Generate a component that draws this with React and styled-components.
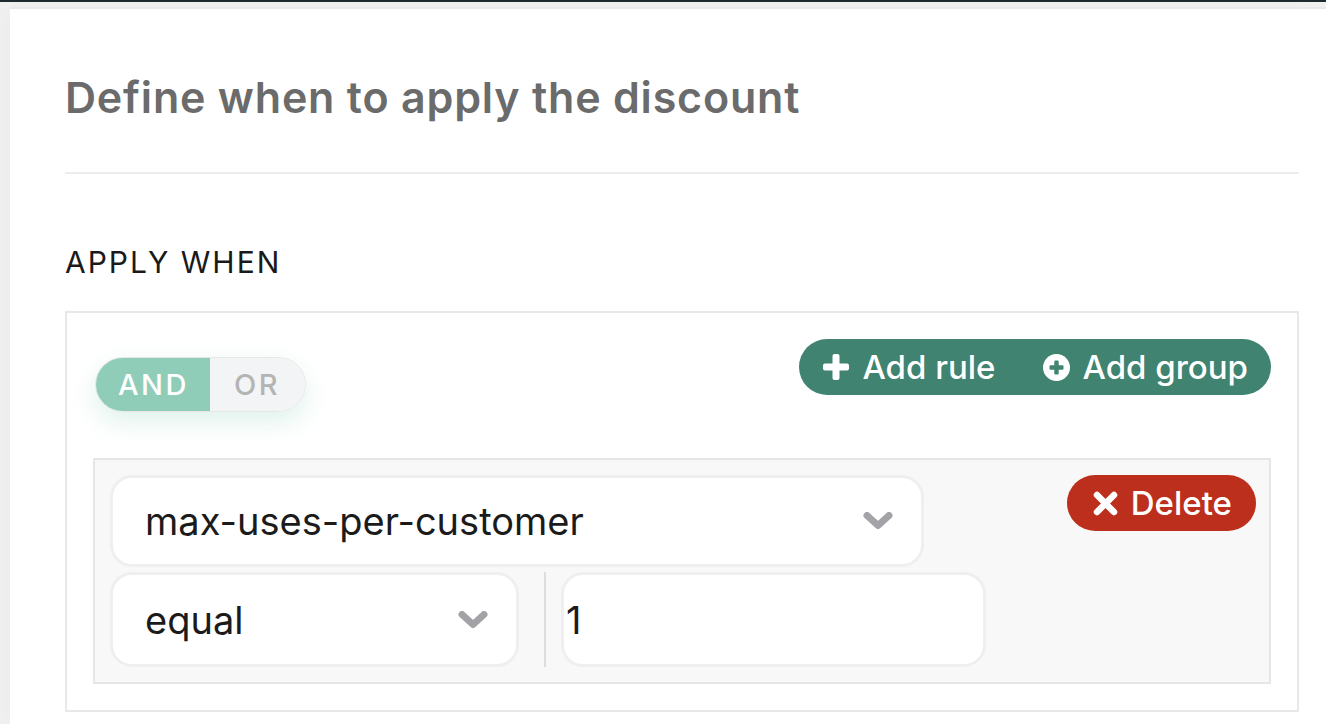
import styled, { createGlobalStyle } from 'styled-components';

const GlobalStyle = createGlobalStyle`
  html, body {
    margin: 0;
    padding: 0;
    background-color: #f2f2f2;
    font-family: Inter, 'Noto Sans', sans-serif;
  }
  * {
    box-sizing: border-box;
  }
`;

const TopBar = styled.div`
  height: 2px;
  background-color: #1d2b31;
`;

const Page = styled.div`
  padding: 5px 0 0 10px;
  height: 722px;
  overflow: hidden;
`;

const Card = styled.div`
  background-color: #fff;
  border-top: 2px solid #e9e9e9;
  box-shadow: -10px 0 30px rgba(0, 0, 0, 0.03);
  padding: 64px 27px 0 55px;
  height: 100%;
`;

const Title = styled.h1`
  margin: 0;
  font-size: 43px;
  line-height: 48px;
  font-weight: 600;
  letter-spacing: 0.8px;
  color: #6b6b6b;
`;

const Divider = styled.hr`
  margin: 51px 0 0 0;
  border: none;
  border-top: 2px solid #ececec;
`;

const Label = styled.div`
  margin-top: 70px;
  font-size: 30px;
  line-height: 36px;
  letter-spacing: 2px;
  color: #1a1a1a;
`;

const RuleBox = styled.div`
  margin-top: 31px;
  border: 2px solid #e8e8e8;
  padding: 26px 26px 26px 26px;
`;

const Header = styled.div`
  display: flex;
  justify-content: space-between;
  align-items: flex-start;
`;

const Toggle = styled.div`
  display: flex;
  margin: 18px 0 0 2px;
  height: 55px;
  border-radius: 28px;
  border: 1px solid #e6e6e6;
  overflow: hidden;
  box-shadow: 0 10px 26px rgba(110, 195, 165, 0.22);
`;

const ToggleOption = styled.span`
  display: flex;
  align-items: center;
  padding: ${({ active }) => (active ? '0 21px 0 22px' : '0 25px 0 24px')};
  font-size: 29px;
  font-weight: 500;
  letter-spacing: 2.5px;
  color: ${({ active }) => (active ? '#fff' : '#b4b4b4')};
  background-color: ${({ active }) => (active ? '#8fcdb9' : '#f3f4f5')};
`;

const ActionPill = styled.div`
  display: flex;
  height: 56px;
  border-radius: 28px;
  background-color: #3f8370;
`;

const PillButton = styled.button`
  display: flex;
  align-items: center;
  gap: 13px;
  border: none;
  background: ${({ danger }) => (danger ? '#bd2f1d' : 'transparent')};
  color: #fff;
  font-family: inherit;
  font-size: 33px;
  font-weight: 500;
  padding: ${({ danger }) => (danger ? '0 24px 0 26px' : '0 23px 0 24px')};
  height: 56px;
  border-radius: 28px;
  cursor: pointer;
  svg {
    flex-shrink: 0;
  }
`;

const Group = styled.div`
  margin-top: 46px;
  display: flex;
  justify-content: space-between;
  align-items: flex-start;
  background-color: #f8f8f8;
  border: 2px solid #e6e6e6;
  padding: 15px 13px 15px 15px;
`;

const Rules = styled.div`
  display: flex;
  flex-direction: column;
  gap: 5px;
`;

const Row = styled.div`
  display: flex;
  align-items: stretch;
`;

const Select = styled.div`
  display: flex;
  align-items: center;
  justify-content: space-between;
  width: ${({ width }) => width}px;
  height: ${({ height }) => height}px;
  padding: 0 28px 0 32px;
  background-color: #fff;
  border: 3px solid #efefef;
  border-radius: 22px;
  font-size: 38px;
  color: #1b1b1b;
`;

const Separator = styled.div`
  width: 2px;
  margin: 0 15px 0 25px;
  background-color: #dcdcdc;
`;

const Input = styled.input`
  width: 425px;
  height: 95px;
  padding: 0 2px;
  background-color: #fff;
  border: 3px solid #efefef;
  border-radius: 22px;
  font-family: inherit;
  font-size: 38px;
  color: #1b1b1b;
  outline: none;
`;

const Chevron = () => (
  <svg width="30" height="18" viewBox="0 0 30 18">
    <path
      d="M4 3.5 L15 13.5 L26 3.5"
      fill="none"
      stroke="#a2a2a7"
      strokeWidth="7"
      strokeLinecap="round"
      strokeLinejoin="round"
    />
  </svg>
);

const PlusIcon = () => (
  <svg width="26" height="26" viewBox="0 0 26 26">
    <rect x="9.5" y="0" width="7" height="26" rx="2" fill="#fff" />
    <rect x="0" y="9.5" width="26" height="7" rx="2" fill="#fff" />
  </svg>
);

const PlusCircleIcon = () => (
  <svg width="27" height="27" viewBox="0 0 27 27">
    <circle cx="13.5" cy="13.5" r="13.5" fill="#fff" />
    <rect x="11.3" y="6.5" width="4.4" height="14" rx="1.2" fill="#3f8370" />
    <rect x="6.5" y="11.3" width="14" height="4.4" rx="1.2" fill="#3f8370" />
  </svg>
);

const TimesIcon = () => (
  <svg width="25" height="25" viewBox="0 0 25 25">
    <path
      d="M4 4 L21 21 M21 4 L4 21"
      stroke="#fff"
      strokeWidth="6.5"
      strokeLinecap="round"
    />
  </svg>
);

const App = () => {
  return (
    <>
      <GlobalStyle />
      <TopBar />
      <Page>
        <Card>
          <Title>Define when to apply the discount</Title>
          <Divider />
          <Label>APPLY WHEN</Label>
          <RuleBox>
            <Header>
              <Toggle>
                <ToggleOption active>AND</ToggleOption>
                <ToggleOption>OR</ToggleOption>
              </Toggle>
              <ActionPill>
                <PillButton>
                  <PlusIcon />
                  Add rule
                </PillButton>
                <PillButton>
                  <PlusCircleIcon />
                  Add group
                </PillButton>
              </ActionPill>
            </Header>
            <Group>
              <Rules>
                <Row>
                  <Select width={814} height={92}>
                    max-uses-per-customer
                    <Chevron />
                  </Select>
                </Row>
                <Row>
                  <Select width={409} height={95}>
                    equal
                    <Chevron />
                  </Select>
                  <Separator />
                  <Input value="1" readOnly />
                </Row>
              </Rules>
              <PillButton danger>
                <TimesIcon />
                Delete
              </PillButton>
            </Group>
          </RuleBox>
        </Card>
      </Page>
    </>
  );
};

export default App;
